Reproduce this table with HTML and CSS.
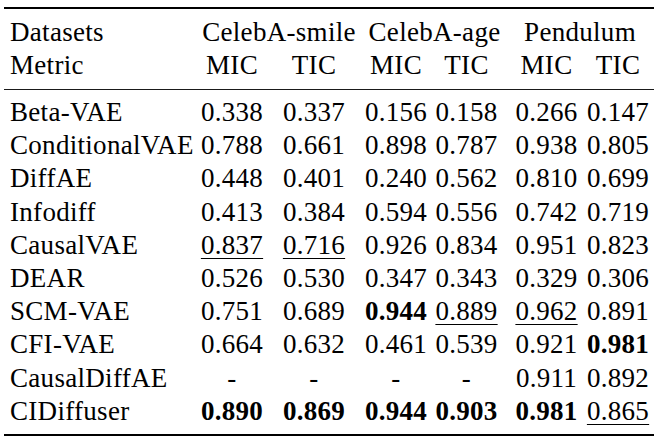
FILE: index.html
```html
<!DOCTYPE html>
<html lang="en">
<head>
<meta charset="utf-8">
<title>Results table</title>
<link rel="stylesheet" href="styles.css">
</head>
<body>
<div class="wrap">
<table class="results">
  <colgroup>
    <col class="c-label"><col class="c-1"><col class="c-2"><col class="c-3"><col class="c-4"><col class="c-5"><col class="c-6">
  </colgroup>
  <thead>
    <tr class="h1">
      <th class="label">Datasets</th>
      <th colspan="2">CelebA-smile</th>
      <th colspan="2" class="age">CelebA-age</th>
      <th colspan="2" class="pend">Pendulum</th>
    </tr>
    <tr class="h2">
      <th class="label">Metric</th>
      <th>MIC</th><th>TIC</th><th>MIC</th><th>TIC</th><th class="p5">MIC</th><th>TIC</th>
    </tr>
  </thead>
  <tbody>
    <tr class="first"><td class="label">Beta-VAE</td><td>0.338</td><td>0.337</td><td>0.156</td><td>0.158</td><td class="p5">0.266</td><td>0.147</td></tr>
    <tr><td class="label">ConditionalVAE</td><td>0.788</td><td>0.661</td><td>0.898</td><td>0.787</td><td class="p5">0.938</td><td>0.805</td></tr>
    <tr><td class="label">DiffAE</td><td>0.448</td><td>0.401</td><td>0.240</td><td>0.562</td><td class="p5">0.810</td><td>0.699</td></tr>
    <tr><td class="label">Infodiff</td><td>0.413</td><td>0.384</td><td>0.594</td><td>0.556</td><td class="p5">0.742</td><td>0.719</td></tr>
    <tr><td class="label">CausalVAE</td><td><span class="u">0.837</span></td><td><span class="u">0.716</span></td><td>0.926</td><td>0.834</td><td class="p5">0.951</td><td>0.823</td></tr>
    <tr><td class="label">DEAR</td><td>0.526</td><td>0.530</td><td>0.347</td><td>0.343</td><td class="p5">0.329</td><td>0.306</td></tr>
    <tr><td class="label">SCM-VAE</td><td>0.751</td><td>0.689</td><td><b>0.944</b></td><td><span class="u">0.889</span></td><td class="p5"><span class="u">0.962</span></td><td>0.891</td></tr>
    <tr><td class="label">CFI-VAE</td><td>0.664</td><td>0.632</td><td>0.461</td><td>0.539</td><td class="p5">0.921</td><td><b>0.981</b></td></tr>
    <tr><td class="label">CausalDiffAE</td><td>-</td><td>-</td><td>-</td><td>-</td><td class="p5">0.911</td><td>0.892</td></tr>
    <tr class="last"><td class="label">CIDiffuser</td><td><b>0.890</b></td><td><b>0.869</b></td><td><b>0.944</b></td><td><b>0.903</b></td><td class="p5"><b>0.981</b></td><td><span class="u">0.865</span></td></tr>
  </tbody>
</table>
</div>
</body>
</html>
```

FILE: styles.css
```css
html, body {
  margin: 0;
  padding: 0;
  background: #ffffff;
}

.wrap {
  padding: 7px 4px 0 4px;
}

.results {
  width: 650px;
  table-layout: fixed;
  border-collapse: collapse;
  font-family: "Liberation Serif", "Times New Roman", serif;
  font-size: 27px;
  letter-spacing: 0.3px;
  color: #000;
}

.c-label { width: 193px; }
.c-1 { width: 70px; }
.c-2 { width: 94px; }
.c-3 { width: 70px; }
.c-4 { width: 71px; }
.c-5 { width: 80px; }
.c-6 { width: 72px; }

.results th,
.results td {
  padding: 0;
  font-weight: normal;
  text-align: center;
  white-space: nowrap;
  line-height: 33.2px;
}

.results th {
  line-height: 33px;
}

.results .label {
  text-align: left;
  padding-left: 6px;
}

.results .p5 {
  padding-left: 9px;
}

.results .age {
  padding-left: 6px;
}

.results .pend {
  padding-left: 4px;
}

.results thead tr.h1 {
  border-top: 2px solid #000;
}

.results thead tr.h1 th {
  padding-top: 7px;
}

.results thead tr.h2 th {
  padding-bottom: 7px;
}

.results tbody tr.first {
  border-top: 1px solid #1a1a1a;
}

.results tbody tr.first td {
  padding-top: 6px;
}

.results tbody tr.last td {
  padding-bottom: 6px;
}

.results tbody tr.last {
  border-bottom: 2px solid #000;
}

.results b {
  font-weight: bold;
}

.u {
  text-decoration: underline;
  text-decoration-thickness: 1px;
  text-underline-offset: 4px;
}
```
